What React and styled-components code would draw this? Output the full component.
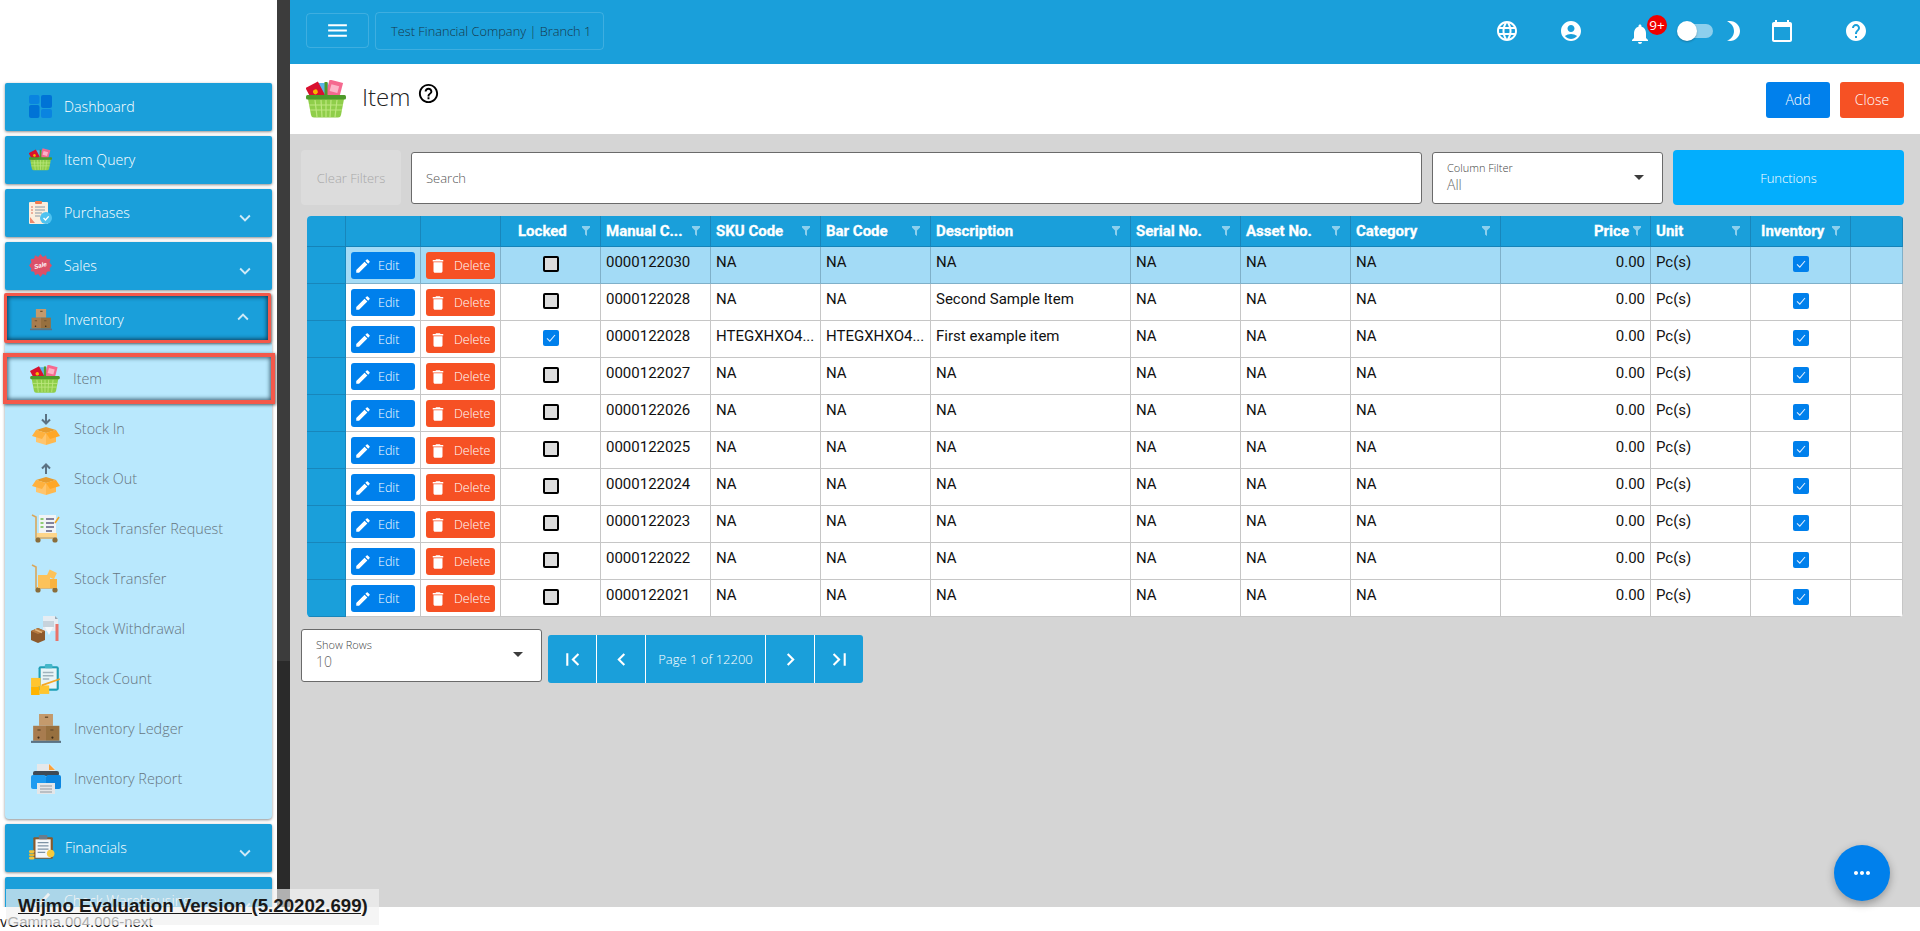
import React from 'react';
import styled, { createGlobalStyle } from 'styled-components';
import {
  MdMenu, MdLanguage, MdAccountCircle, MdNotifications, MdBrightness3, MdCalendarToday, MdHelp,
  MdHelpOutline, MdEdit, MdDelete, MdExpandMore, MdExpandLess, MdFirstPage, MdLastPage,
  MdChevronLeft, MdChevronRight, MdMoreHoriz,
} from 'react-icons/md';

const BLUE = '#1a9fda';
const ACTION = '#0080ec';
const DANGER = '#f65124';
const UI_FONT = '"Open Sans", "Liberation Sans", sans-serif';
const GRID_COLUMNS = '39px 75px 80px 100px 110px 110px 110px 200px 110px 110px 150px 150px 100px 100px 1fr';

const GlobalStyle = createGlobalStyle`
  html, body {
    margin: 0;
    padding: 0;
    background: #fff;
    overflow: hidden;
  }
  * { box-sizing: border-box; }
`;

/* drawn menu icons */
const DashboardIcon = () => (
  <svg viewBox="0 0 23 23" width="100%" height="100%">
    <rect x="0" y="0" width="10.5" height="9" rx="2" fill="#0a84e0" />
    <rect x="0" y="10" width="10.5" height="13" rx="2" fill="#0073d6" />
    <rect x="12" y="0" width="11" height="13" rx="2" fill="#0073d6" />
    <rect x="12" y="14" width="11" height="9" rx="2" fill="#0a84e0" />
  </svg>
);

const BasketIcon = () => (
  <svg viewBox="0 0 40 38" width="100%" height="100%">
    <rect x="12" y="3" width="10" height="14" fill="#5ab4e8" />
    <g transform="rotate(-28 9 11)">
      <rect x="2" y="4" width="14" height="15" fill="#d8102e" />
      <circle cx="9" cy="12" r="2.4" fill="#f7b500" />
    </g>
    <g transform="rotate(15 28 10)">
      <rect x="21" y="1" width="14" height="16" fill="#f5698f" />
      <rect x="24" y="5" width="8" height="7" fill="#fcb4c8" />
    </g>
    <rect x="18.5" y="2" width="3" height="16" fill="#4e9a2a" />
    <path d="M2 19h36l-3 16a3 3 0 0 1-3 2.5H8a3 3 0 0 1-3-2.5z" fill="#8fce4a" />
    <path d="M9 20l2 17M15 20l1 17M20 20v17M25 20l-1 17M31 20l-2 17M3 25h34M4 30h32" stroke="#bde77f" strokeWidth="1.2" fill="none" />
    <rect x="0" y="15" width="40" height="4.5" rx="1.5" fill="#4e9a2a" />
  </svg>
);

const PurchasesIcon = () => (
  <svg viewBox="0 0 23 23" width="100%" height="100%">
    <rect x="0" y="1" width="19" height="22" rx="1" fill="#fbeedd" />
    <rect x="6" y="0" width="7" height="3" rx="1" fill="#f07b4e" />
    <path d="M6 6h10M6 9h10M6 12h7M6 15h5" stroke="#8a9aa6" strokeWidth="1" />
    <path d="M2 6h2M2 9h2M2 12h2" stroke="#e0705a" strokeWidth="1" />
    <path d="M1 16l5 6H1z" fill="#ef8a6d" />
    <circle cx="17" cy="17" r="6" fill="#4fc3f0" />
    <path d="M14.5 17l2 2 3.2-3.6" stroke="#fff" strokeWidth="1.4" fill="none" />
  </svg>
);

const SaleIcon = () => (
  <svg viewBox="0 0 24 24" width="100%" height="100%">
    <path
      d="M12 0l2.4 3 3.4-1.6 .8 3.6 3.7 .2-.8 3.6L24 12l-2.5 3.2 .8 2.8-3.7 .6-.8 3.6-3.4-1.4L12 24l-2.4-3.2-3.4 1.4-.8-3.6-3.7-.6 .8-2.8L0 12l2.5-3.2-.8-3.6 3.7-.2 .8-3.6L9.6 3z"
      fill="#dc5068"
    />
    <text x="12" y="14" fontSize="6.5" fontStyle="italic" fontWeight="700" fill="#fff" textAnchor="middle" fontFamily="Liberation Sans" transform="rotate(-14 12 12)">Sale</text>
  </svg>
);

const BoxesIcon = () => (
  <svg viewBox="0 0 28 28" width="100%" height="100%">
    <rect x="7.5" y="0" width="13" height="11" fill="#c49a6c" />
    <rect x="2" y="11" width="12" height="14" fill="#a87c4f" />
    <rect x="14" y="11" width="12.5" height="14" fill="#97703f" />
    <path d="M13 3h3M6 15h3M18 15h3" stroke="#6f5230" strokeWidth="1.4" />
    <circle cx="7" cy="22" r="1" fill="#3d2c18" />
    <circle cx="20" cy="22" r="1" fill="#3d2c18" />
    <rect x="0" y="25" width="28" height="2" fill="#5b7283" />
  </svg>
);

const StockBoxIcon = ({ $up }) => (
  <svg viewBox="0 0 28 32" width="100%" height="100%">
    <path
      d={$up ? 'M14 11V2M10 5.5L14 1.5l4 4' : 'M14 1v9M10 6.5l4 4 4-4'}
      stroke="#5b7283"
      strokeWidth="2"
      fill="none"
    />
    <path d="M4 17l10-3 10 3-10 3z" fill="#e89c2c" />
    <path d="M4 17l10 3v12L4 29z" fill="#ffc56d" />
    <path d="M24 17l-10 3v12l10-3z" fill="#ffb84d" />
    <path d="M4 17l-4 6 10 3 4-6z" fill="#ffb13d" />
    <path d="M24 17l4 6-10 3-4-6z" fill="#ffa726" />
  </svg>
);

const TrolleyIcon = ({ $list }) => (
  <svg viewBox="0 0 30 30" width="100%" height="100%">
    <path d="M1 1l4 2v21h21" stroke="#d9a75c" strokeWidth="1.6" fill="none" />
    <circle cx="7" cy="26" r="2.6" fill="#8a6d3b" />
    <circle cx="24" cy="26" r="2.6" fill="#8a6d3b" />
    {$list ? (
      <>
        <rect x="8" y="1" width="17" height="20" fill="#f1f4f6" />
        <path d="M9.5 5h3M9.5 9h3M9.5 13h3" stroke="#6fbf4a" strokeWidth="1.4" />
        <path d="M15 5h8M15 9h8M15 13h8M15 17h6" stroke="#5e5c80" strokeWidth="1.5" />
        <path d="M24 9l4-6" stroke="#f4a623" strokeWidth="1.6" />
        <rect x="6" y="19" width="20" height="4" fill="#fdd58a" />
      </>
    ) : (
      <>
        <rect x="7" y="11" width="12" height="13" fill="#fcc25a" />
        <rect x="19" y="15" width="7" height="9" fill="#f9b340" />
        <rect x="17" y="7" width="8" height="7" transform="rotate(25 21 10)" fill="#fcc25a" />
      </>
    )}
  </svg>
);

const WithdrawalIcon = () => (
  <svg viewBox="0 0 30 30" width="100%" height="100%">
    <path d="M12 2h12l3 3v12H12z" fill="#e6edf3" />
    <path d="M24 2l3 3h-3z" fill="#97a9b6" />
    <rect x="12" y="7" width="11" height="6" fill="#c7d3dc" />
    <path d="M14 13l8 0-4 8z" fill="#f6f9fb" />
    <rect x="24.5" y="10" width="3" height="17" fill="#e8736a" />
    <path d="M0 17l7-3 7 3v9l-7 3-7-3z" fill="#8d5a2b" />
    <path d="M0 17l7 3 7-3-7-3z" fill="#b67a3f" />
    <path d="M4 15.5l7 3" stroke="#e2b67d" strokeWidth="1.4" />
  </svg>
);

const CountIcon = () => (
  <svg viewBox="0 0 28 30" width="100%" height="100%">
    <rect x="7" y="3" width="19" height="23" rx="2" fill="#1f9fb5" />
    <rect x="9" y="5" width="15" height="19" fill="#e8f4f7" />
    <rect x="13" y="1" width="7" height="4" rx="1" fill="#44b7c9" />
    <path d="M11 9h10M11 12h10M11 15h6" stroke="#9fb3bd" strokeWidth="1.4" />
    <rect x="0" y="14" width="9" height="8" fill="#ffc52f" />
    <rect x="0" y="22" width="8" height="8" fill="#ffb400" />
    <rect x="8" y="21" width="9" height="8" fill="#ffc52f" />
    <path d="M10 21l17-6" stroke="#f5a623" strokeWidth="1.6" />
  </svg>
);

const PrinterIcon = () => (
  <svg viewBox="0 0 30 30" width="100%" height="100%">
    <path d="M6 0h13l5 5v10H6z" fill="#e6e8ea" />
    <path d="M18 0l6 6h-6z" fill="#f9a23b" />
    <rect x="2" y="7" width="26" height="5" rx="2" fill="#3e4a56" />
    <rect x="0" y="11" width="15" height="14" rx="2" fill="#1d9bf0" />
    <rect x="15" y="11" width="15" height="14" rx="2" fill="#0c86e0" />
    <rect x="6" y="19" width="18" height="11" fill="#e4e6e8" />
    <path d="M9 22h12M9 25h12M9 28h12" stroke="#8f98a0" strokeWidth="1.2" />
  </svg>
);

const FinancialsIcon = () => (
  <svg viewBox="0 0 24 24" width="100%" height="100%">
    <rect x="4" y="2" width="18" height="20" rx="1" fill="#8a5a2b" />
    <rect x="6" y="4" width="14" height="17" fill="#f4f7f9" />
    <rect x="9" y="0" width="8" height="4" rx="1" fill="#6b7c8a" />
    <path d="M8 7h10M8 10h10M8 13h10M8 16h7" stroke="#7d93a5" strokeWidth="1.2" />
    <rect x="0" y="14" width="5" height="2.5" rx="1" fill="#f2c43c" />
    <rect x="0" y="17" width="5" height="2.5" rx="1" fill="#e8b52c" />
    <rect x="0" y="20" width="5" height="2.5" rx="1" fill="#f2c43c" />
    <circle cx="20" cy="17" r="3.5" fill="#f5ca3d" />
  </svg>
);

const WarehouseIcon = () => (
  <svg viewBox="0 0 24 24" width="100%" height="100%">
    <path d="M4 13l5 5L21 5" stroke="#e8eef2" strokeWidth="3" fill="none" />
  </svg>
);

const FunnelIcon = () => (
  <svg viewBox="0 0 8 10" width="8" height="10">
    <path d="M0 0h8v1.6L5 4.6V10L3 8.6v-4L0 1.6z" fill="currentColor" />
  </svg>
);

const ThinCheck = () => (
  <svg viewBox="0 0 16 16" width="16" height="16">
    <path d="M4 8.4l2.8 2.8L12 5" stroke="#dcecff" strokeWidth="1.1" fill="none" />
  </svg>
);

/* page frame */
const Page = styled.div`
  position: relative;
  display: flex;
  flex-direction: column;
  height: 931px;
  overflow: hidden;
  background: #fff;
`;

const Workspace = styled.div`
  display: flex;
  height: 907px;
`;

const BuildFooter = styled.div`
  height: 24px;
  padding-top: 5px;
  font: 15px/19px "Liberation Sans", Arial, sans-serif;
  color: #222;
`;

const EvaluationBanner = styled.div`
  position: absolute;
  left: 6px;
  top: 889px;
  width: 373px;
  height: 36px;
  padding-left: 12px;
  background: rgba(240, 240, 240, 0.68);
  font: 700 18.7px/34px "Liberation Sans", Arial, sans-serif;
  color: #1a1a1a;
  text-decoration: underline;
  white-space: nowrap;
`;

/* sidebar */
const Sidebar = styled.aside`
  flex: 0 0 277px;
  height: 907px;
  overflow: hidden;
  padding: 83px 5px 0;
  display: flex;
  flex-direction: column;
  background: #fff;
`;

const NavButton = styled.div`
  position: relative;
  flex: 0 0 ${props => (props.$active ? '50px' : '48px')};
  width: 267px;
  margin: ${props => (props.$active ? '-2px 0 0 -1px' : '0 0 5px')};
  display: flex;
  align-items: center;
  padding: ${props => (props.$active ? '3px 0 0 23px' : '0 0 1px 24px')};
  background: ${BLUE};
  border-radius: 2px;
  border: ${props => (props.$active ? '3px solid #f4584a' : 'none')};
  box-shadow: ${props => (props.$active
    ? 'inset 0 0 4px 1px #0b3c57, 1px 1px 3px rgba(0, 0, 0, 0.6)'
    : '0 1px 3px rgba(0, 0, 0, 0.45)')};
  color: #fff;
  font: 300 14.2px/20px ${UI_FONT};
`;

const NavIcon = styled.span`
  flex: 0 0 ${props => props.$width || 24}px;
  width: ${props => props.$width || 24}px;
  height: ${props => props.$height || 24}px;
  margin-right: ${props => props.$after || 12}px;
  display: block;
`;

const NavArrow = styled.span`
  position: absolute;
  right: ${props => props.$right || 16}px;
  top: ${props => props.$top || 18}px;
  font-size: 22px;
  line-height: 0;
  color: #cfeaf7;
`;

const SubMenu = styled.div`
  flex: 0 0 476px;
  margin-bottom: 5px;
  padding-top: 10px;
  background: #b9e8fd;
  border-radius: 0 0 4px 4px;
  box-shadow: 0 1px 3px rgba(0, 0, 0, 0.45);
`;

const SubItem = styled.div`
  height: ${props => (props.$active ? '51px' : '50px')};
  margin: ${props => (props.$active ? '0 -3px 0 -2px' : '0')};
  display: flex;
  align-items: center;
  padding-left: 26px;
  border: ${props => (props.$active ? '4px solid #f4584a' : 'none')};
  box-shadow: ${props => (props.$active
    ? 'inset 0 0 4px 1px #3b5f72, 1px 1px 3px rgba(0, 0, 0, 0.6)'
    : 'none')};
  color: #66757f;
  font: 300 14.4px/20px ${UI_FONT};
`;

const SubIcon = styled.span`
  flex: 0 0 30px;
  width: 30px;
  height: ${props => props.$height || 32}px;
  margin-right: 13px;
  margin-left: ${props => (props.$shift ? '-3px' : '0')};
  display: block;
`;

const ScrollTrack = styled.div`
  flex: 0 0 13px;
  background: #2a2a2a;
`;

const ScrollThumb = styled.div`
  height: 661px;
  background: #3c3c3c;
`;

/* main column */
const Main = styled.main`
  flex: 1;
  min-width: 0;
  display: flex;
  flex-direction: column;
  background: #d5d5d5;
  position: relative;
`;

const TopBar = styled.header`
  height: 64px;
  display: flex;
  align-items: center;
  padding: 0 52px 3px 16px;
  background: ${BLUE};
  color: #fff;
`;

const MenuButton = styled.div`
  width: 63px;
  height: 35px;
  margin-right: 6px;
  display: flex;
  align-items: center;
  justify-content: center;
  font-size: 25px;
  border: 1px solid rgba(255, 255, 255, 0.16);
  border-radius: 4px;
`;

const CompanyBox = styled.div`
  width: 229px;
  height: 38px;
  padding-left: 15px;
  font: 300 12.8px/36px ${UI_FONT};
  color: #17384a;
  white-space: nowrap;
  border: 1px solid rgba(255, 255, 255, 0.16);
  border-radius: 4px;
`;

const ToolIcons = styled.div`
  margin-left: auto;
  display: flex;
  align-items: center;
`;

const ToolIcon = styled.span`
  position: relative;
  width: 24px;
  height: 24px;
  margin-left: ${props => props.$gap || 0}px;
  font-size: ${props => props.$size || 24}px;
  display: flex;
  align-items: center;
  justify-content: center;
  top: ${props => props.$nudge || 0}px;
`;

const Badge = styled.span`
  position: absolute;
  left: 19px;
  top: -7px;
  width: 20px;
  height: 20px;
  border-radius: 50%;
  background: #f00000;
  color: #fff;
  text-align: center;
  font: 400 13.5px/20px ${UI_FONT};
`;

const ThemeSwitch = styled.span`
  position: relative;
  width: 33px;
  height: 14px;
  margin-left: 28px;
  border-radius: 7px;
  background: rgba(255, 255, 255, 0.5);
`;

const SwitchKnob = styled.span`
  position: absolute;
  left: -3px;
  top: -3px;
  width: 20px;
  height: 20px;
  border-radius: 50%;
  background: #fff;
  box-shadow: 0 1px 2px rgba(0, 0, 0, 0.25);
`;

const TitleBar = styled.section`
  height: 70px;
  display: flex;
  align-items: flex-start;
  padding: 16px 16px 0;
  background: #fff;
`;

const TitleIcon = styled.span`
  width: 40px;
  height: 38px;
  display: block;
`;

const TitleText = styled.h1`
  margin: 0 0 0 16px;
  font: 300 24px/34px ${UI_FONT};
  color: #222;
`;

const TitleHelp = styled.span`
  margin: 2px 0 0 7px;
  font-size: 23px;
  line-height: 0;
  color: #000;
`;

const TitleActions = styled.div`
  margin: 2px 0 0 auto;
  display: flex;
  gap: 10px;
`;

const ActionButton = styled.button`
  width: 64px;
  height: 36px;
  padding: 0;
  border: none;
  border-radius: 3px;
  background: ${props => (props.$danger ? DANGER : ACTION)};
  color: #fff;
  font: 300 14px/36px ${UI_FONT};
`;

const FilterBar = styled.div`
  margin: 16px 16px 0 11px;
  height: 55px;
  display: flex;
  align-items: center;
  gap: 10px;
`;

const ClearButton = styled.button`
  flex: 0 0 100px;
  height: 55px;
  padding: 0;
  border: none;
  border-radius: 4px;
  background: #dcdcdc;
  color: #a8a8a8;
  font: 300 13px/20px ${UI_FONT};
`;

const SearchBox = styled.div`
  flex: 1;
  height: 52px;
  padding-left: 14px;
  background: #fff;
  border: 1px solid #6a6a6a;
  border-radius: 3px;
  color: #555;
  font: 300 13px/50px ${UI_FONT};
`;

const SelectBox = styled.div`
  position: relative;
  flex: 0 0 ${props => props.$width}px;
  width: ${props => props.$width}px;
  height: ${props => props.$height || 52}px;
  padding: 7px 0 0 14px;
  background: #fff;
  border: 1px solid #6a6a6a;
  border-radius: 3px;
`;

const SelectLabel = styled.div`
  font: 300 11px/15px ${UI_FONT};
  color: #444;
`;

const SelectValue = styled.div`
  font: 300 14px/20px ${UI_FONT};
  color: #666;
`;

const SelectCaret = styled.span`
  position: absolute;
  right: 18px;
  top: 22px;
  width: 0;
  height: 0;
  border-left: 5px solid transparent;
  border-right: 5px solid transparent;
  border-top: 5px solid #3c3c3c;
`;

const FunctionsButton = styled.button`
  flex: 0 0 231px;
  height: 55px;
  padding: 0;
  border: none;
  border-radius: 4px;
  background: #03aefd;
  color: #fff;
  font: 300 13px/20px ${UI_FONT};
`;

/* grid */
const Grid = styled.div`
  margin: 11px 17px 0;
  border-radius: 4px;
  overflow: hidden;
  background: #fff;
  font-family: Roboto, "Liberation Sans", sans-serif;
`;

const GridRow = styled.div`
  display: grid;
  grid-template-columns: ${GRID_COLUMNS};
  height: ${props => (props.$head ? '31px' : '37px')};
  background: ${props => (props.$selected ? '#a3dbf6' : props.$head ? BLUE : '#fff')};
`;

const HeadCell = styled.div`
  display: flex;
  align-items: center;
  justify-content: ${props => (props.$right ? 'flex-end' : 'space-between')};
  gap: ${props => (props.$right ? '4px' : '0')};
  padding: 0 ${props => (props.$right ? '9px' : '10px')} 1px ${props => props.$inset || 5}px;
  color: #fff;
  font-size: 15px;
  font-weight: 700;
  -webkit-text-stroke: 0.3px #fff;
  white-space: nowrap;
  border-right: 1px solid #1886bb;
  border-bottom: 1px solid #1583b8;
`;

const HeadFilter = styled.span`
  display: flex;
  color: rgba(255, 255, 255, 0.5);
  -webkit-text-stroke: 0;
`;

const RowHeader = styled.div`
  background: ${BLUE};
  border-right: 1px solid #1886bb;
  border-bottom: 1px solid #1886bb;
`;

const Cell = styled.div`
  padding: 6px 5px 0;
  font-size: 15px;
  line-height: 18px;
  color: #111;
  white-space: nowrap;
  overflow: hidden;
  text-align: ${props => (props.$right ? 'right' : 'left')};
  border-right: 1px solid ${props => (props.$selected ? '#7fb0c9' : '#c6c6c6')};
  border-bottom: 1px solid ${props => (props.$selected ? '#7fb0c9' : '#c6c6c6')};
`;

const ButtonCell = styled(Cell)`
  padding: 5px 0 0 5px;
`;

const CheckCell = styled(Cell)`
  padding-top: 9px;
  display: flex;
  justify-content: center;
`;

const RowButton = styled.button`
  width: ${props => props.$width}px;
  height: 27px;
  padding: 0 0 0 ${props => props.$inset}px;
  display: flex;
  align-items: center;
  gap: ${props => props.$gap}px;
  border: none;
  border-radius: 3px;
  background: ${props => (props.$danger ? DANGER : ACTION)};
  color: #fff;
  font: 300 12.5px/27px ${UI_FONT};
  svg { font-size: 18px; flex: none; }
`;

const CheckBox = styled.span`
  width: 16px;
  height: 16px;
  display: flex;
  align-items: center;
  justify-content: center;
  border-radius: 2px;
  border: ${props => (props.$checked ? 'none' : '2px solid #000')};
  background: ${props => (props.$checked ? ACTION : '#dcdcdc')};
`;

/* pager */
const PagerRow = styled.div`
  margin: 12px 0 0 11px;
  display: flex;
  align-items: flex-start;
  gap: 6px;
`;

const Pager = styled.div`
  margin-top: 6px;
  display: flex;
  height: 48px;
  border-radius: 3px;
  overflow: hidden;
`;

const PagerButton = styled.div`
  flex: 0 0 ${props => props.$width || 49}px;
  display: flex;
  align-items: center;
  justify-content: center;
  background: ${BLUE};
  color: #fff;
  font: 300 13px/20px ${UI_FONT};
  border-right: ${props => (props.$last ? 'none' : '1px solid #fff')};
  svg { font-size: 25px; }
`;

const FloatingButton = styled.div`
  position: absolute;
  right: 30px;
  bottom: 6px;
  width: 56px;
  height: 56px;
  display: flex;
  align-items: center;
  justify-content: center;
  border-radius: 50%;
  background: ${ACTION};
  color: #fff;
  font-size: 24px;
  box-shadow: 0 3px 8px rgba(0, 0, 0, 0.3);
`;

const NAV_TOP = [
  { label: 'Dashboard', icon: <DashboardIcon /> },
  { label: 'Item Query', icon: <BasketIcon /> },
  { label: 'Purchases', icon: <PurchasesIcon />, more: true },
  { label: 'Sales', icon: <SaleIcon />, more: true },
];

const SUB_ITEMS = [
  { label: 'Item', icon: <BasketIcon />, height: 28, active: true },
  { label: 'Stock In', icon: <StockBoxIcon /> },
  { label: 'Stock Out', icon: <StockBoxIcon $up /> },
  { label: 'Stock Transfer Request', icon: <TrolleyIcon $list /> },
  { label: 'Stock Transfer', icon: <TrolleyIcon /> },
  { label: 'Stock Withdrawal', icon: <WithdrawalIcon /> },
  { label: 'Stock Count', icon: <CountIcon /> },
  { label: 'Inventory Ledger', icon: <BoxesIcon /> },
  { label: 'Inventory Report', icon: <PrinterIcon /> },
];

const HEADINGS = [
  { text: 'Locked', inset: 17 },
  { text: 'Manual C...' },
  { text: 'SKU Code' },
  { text: 'Bar Code' },
  { text: 'Description' },
  { text: 'Serial No.' },
  { text: 'Asset No.' },
  { text: 'Category' },
  { text: 'Price', right: true },
  { text: 'Unit' },
  { text: 'Inventory', inset: 10 },
];

const ROWS = [
  { code: '0000122030', selected: true },
  { code: '0000122028', description: 'Second Sample Item' },
  { code: '0000122028', locked: true, sku: 'HTEGXHXO4...', bar: 'HTEGXHXO4...', description: 'First example item' },
  { code: '0000122027' },
  { code: '0000122026' },
  { code: '0000122025' },
  { code: '0000122024' },
  { code: '0000122023' },
  { code: '0000122022' },
  { code: '0000122021' },
];

const ItemRow = ({ row }) => {
  const { selected } = row;
  return (
    <GridRow $selected={selected}>
      <RowHeader />
      <ButtonCell $selected={selected}>
        <RowButton $width={64} $inset={3} $gap={6}><MdEdit />Edit</RowButton>
      </ButtonCell>
      <ButtonCell $selected={selected}>
        <RowButton $danger $width={69} $inset={3} $gap={7}><MdDelete />Delete</RowButton>
      </ButtonCell>
      <CheckCell $selected={selected}>
        <CheckBox $checked={row.locked}>{row.locked && <ThinCheck />}</CheckBox>
      </CheckCell>
      <Cell $selected={selected}>{row.code}</Cell>
      <Cell $selected={selected}>{row.sku || 'NA'}</Cell>
      <Cell $selected={selected}>{row.bar || 'NA'}</Cell>
      <Cell $selected={selected}>{row.description || 'NA'}</Cell>
      <Cell $selected={selected}>NA</Cell>
      <Cell $selected={selected}>NA</Cell>
      <Cell $selected={selected}>NA</Cell>
      <Cell $selected={selected} $right>0.00</Cell>
      <Cell $selected={selected}>Pc(s)</Cell>
      <CheckCell $selected={selected}>
        <CheckBox $checked><ThinCheck /></CheckBox>
      </CheckCell>
      <Cell $selected={selected} />
    </GridRow>
  );
};

const App = () => (
  <Page>
    <GlobalStyle />
    <Workspace>
      <Sidebar>
        {NAV_TOP.map(item => (
          <NavButton key={item.label}>
            <NavIcon $width={23} $height={23}>{item.icon}</NavIcon>
            {item.label}
            {item.more && <NavArrow><MdExpandMore /></NavArrow>}
          </NavButton>
        ))}
        <NavButton $active>
          <NavIcon $width={22} $height={22}><BoxesIcon /></NavIcon>
          Inventory
          <NavArrow $top={10} $right={14}><MdExpandLess /></NavArrow>
        </NavButton>
        <SubMenu>
          {SUB_ITEMS.map(item => (
            <SubItem key={item.label} $active={item.active}>
              <SubIcon $height={item.height} $shift={item.active}>{item.icon}</SubIcon>
              {item.label}
            </SubItem>
          ))}
        </SubMenu>
        <NavButton>
          <NavIcon $width={26} $height={26} $after={10}><FinancialsIcon /></NavIcon>
          Financials
          <NavArrow><MdExpandMore /></NavArrow>
        </NavButton>
        <NavButton>
          <NavIcon $width={23} $height={23}><WarehouseIcon /></NavIcon>
          Check Warehousing
          <NavArrow><MdExpandMore /></NavArrow>
        </NavButton>
      </Sidebar>
      <ScrollTrack><ScrollThumb /></ScrollTrack>
      <Main>
        <TopBar>
          <MenuButton><MdMenu /></MenuButton>
          <CompanyBox>Test Financial Company | Branch 1</CompanyBox>
          <ToolIcons>
            <ToolIcon><MdLanguage /></ToolIcon>
            <ToolIcon $gap={40}><MdAccountCircle /></ToolIcon>
            <ToolIcon $gap={45} $nudge={3}>
              <MdNotifications />
              <Badge>9+</Badge>
            </ToolIcon>
            <ThemeSwitch><SwitchKnob /></ThemeSwitch>
            <ToolIcon $gap={8} $size={28}><MdBrightness3 /></ToolIcon>
            <ToolIcon $gap={25} $size={28}><MdCalendarToday /></ToolIcon>
            <ToolIcon $gap={50}><MdHelp /></ToolIcon>
          </ToolIcons>
        </TopBar>
        <TitleBar>
          <TitleIcon><BasketIcon /></TitleIcon>
          <TitleText>Item</TitleText>
          <TitleHelp><MdHelpOutline /></TitleHelp>
          <TitleActions>
            <ActionButton>Add</ActionButton>
            <ActionButton $danger>Close</ActionButton>
          </TitleActions>
        </TitleBar>
        <FilterBar>
          <ClearButton>Clear Filters</ClearButton>
          <SearchBox>Search</SearchBox>
          <SelectBox $width={231}>
            <SelectLabel>Column Filter</SelectLabel>
            <SelectValue>All</SelectValue>
            <SelectCaret />
          </SelectBox>
          <FunctionsButton>Functions</FunctionsButton>
        </FilterBar>
        <Grid>
          <GridRow $head>
            <HeadCell />
            <HeadCell />
            <HeadCell />
            {HEADINGS.map(heading => (
              <HeadCell key={heading.text} $inset={heading.inset} $right={heading.right}>
                {heading.text}
                <HeadFilter><FunnelIcon /></HeadFilter>
              </HeadCell>
            ))}
            <HeadCell />
          </GridRow>
          {ROWS.map((row, index) => <ItemRow key={index} row={row} />)}
        </Grid>
        <PagerRow>
          <SelectBox $width={241} $height={53}>
            <SelectLabel>Show Rows</SelectLabel>
            <SelectValue>10</SelectValue>
            <SelectCaret />
          </SelectBox>
          <Pager>
            <PagerButton><MdFirstPage /></PagerButton>
            <PagerButton><MdChevronLeft /></PagerButton>
            <PagerButton $width={120}>Page 1 of 12200</PagerButton>
            <PagerButton><MdChevronRight /></PagerButton>
            <PagerButton $width={48} $last><MdLastPage /></PagerButton>
          </Pager>
        </PagerRow>
        <FloatingButton><MdMoreHoriz /></FloatingButton>
      </Main>
    </Workspace>
    <BuildFooter>vGamma.004.006-next</BuildFooter>
    <EvaluationBanner>Wijmo Evaluation Version (5.20202.699)</EvaluationBanner>
  </Page>
);

export default App;
